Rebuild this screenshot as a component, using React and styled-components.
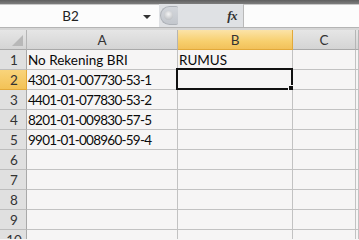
import React from "react";
import styled, { createGlobalStyle } from "styled-components";

const Global = createGlobalStyle`
  html, body { margin: 0; padding: 0; background: #f6f5f5; overflow: hidden; }
  body { font-family: Lato, "Liberation Sans", sans-serif; }
`;

const Page = styled.div`
  width: 359px;
  height: 239px;
  overflow: hidden;
  background: #f6f5f5;
`;

const TopBand = styled.div`
  height: 4px;
  background: linear-gradient(#5f5f5f, #7e7e7e);
`;

const FormulaBar = styled.div`
  display: flex;
  height: 23px;
  background: #dfe1e4;
  border-bottom: 1px solid #b4b4b4;
`;

const NameBox = styled.div`
  position: relative;
  width: 159px;
  background: #fcfcfc;
  border-top: 1px solid #c8c8c8;
  display: flex;
  align-items: center;
  justify-content: center;
  padding-right: 18px;
  box-sizing: border-box;
  font-size: 13.5px;
  color: #222;
`;

const Arrow = styled.span`
  position: absolute;
  right: 8px;
  top: 10px;
  width: 0;
  height: 0;
  border-left: 4px solid transparent;
  border-right: 4px solid transparent;
  border-top: 4px solid #333;
`;

const Middle = styled.div`
  width: 84px;
  display: flex;
  align-items: center;
  justify-content: space-between;
  padding-right: 6px;
  box-sizing: border-box;
`;

const Grip = styled.div`
  width: 18px;
  height: 19px;
  margin-left: 1px;
  border-radius: 10px 2px 2px 10px;
  background: linear-gradient(#d3d6db, #c3c7cd);
  border: 1px solid #aeb2b8;
  border-right: none;
  display: flex;
  align-items: center;
  justify-content: flex-start;
  padding-left: 3px;
  box-sizing: border-box;
  &::after {
    content: "";
    width: 9px;
    height: 9px;
    border-radius: 50%;
    background: radial-gradient(circle at 50% 35%, #f4f4f4, #aeb1b6);
  }
`;

const Fx = styled.span`
  font-family: "Liberation Serif", serif;
  font-style: italic;
  font-weight: bold;
  font-size: 13px;
  color: #333;
  letter-spacing: -0.5px;
`;

const Input = styled.div`
  flex: 1;
  background: #fcfcfc;
  border-left: 1px solid #b9b9b9;
  border-top: 1px solid #c8c8c8;
`;

const Gap = styled.div`
  height: 2px;
  background: #d6d6d6;
`;

const Grid = styled.div`
  display: grid;
  grid-template-columns: 27px 151px 115px 63px 1fr;
  grid-auto-rows: 20px;
`;

const Cell = styled.div`
  position: relative;
  box-sizing: border-box;
  border-right: 1px solid #c2c2c2;
  border-bottom: 1px solid #c2c2c2;
  background: #f6f5f5;
  font-size: 13.5px;
  color: #0a0a0a;
  padding-left: 1px;
  display: flex;
  align-items: center;
  white-space: nowrap;
  overflow: visible;
`;

const Value = styled.span`
  letter-spacing: ${(p) => (p.$num ? "-0.75px" : "0")};
`;

const ColHead = styled.div`
  box-sizing: border-box;
  border-right: 1px solid ${(p) => (p.$sel ? "#e2a93a" : "#b5b5b5")};
  border-bottom: 1px solid ${(p) => (p.$sel ? "#e2a93a" : "#a9a9a9")};
  background: ${(p) =>
    p.$sel
      ? "linear-gradient(#fbe3a8, #f7cf6d 60%, #f2c15a)"
      : "linear-gradient(#e6e6e6, #d4d4d4)"};
  font-size: 13.5px;
  color: #333;
  display: flex;
  align-items: center;
  justify-content: center;
`;

const Corner = styled(ColHead)`
  position: relative;
  &::after {
    content: "";
    position: absolute;
    right: 3px;
    bottom: 3px;
    width: 0;
    height: 0;
    border-left: 11px solid transparent;
    border-bottom: 11px solid #b8b8b8;
  }
`;

const RowHead = styled.div`
  box-sizing: border-box;
  border-right: 1px solid ${(p) => (p.$sel ? "#e2a93a" : "#a9a9a9")};
  border-bottom: 1px solid ${(p) => (p.$sel ? "#e2a93a" : "#bdbdbd")};
  background: ${(p) =>
    p.$sel ? "linear-gradient(#f9d47b, #f3c256)" : "#e0e0e0"};
  font-size: 13.5px;
  color: #333;
  display: flex;
  align-items: center;
  justify-content: center;
  padding-left: 2px;
`;

const Selection = styled.div`
  position: absolute;
  left: -2px;
  top: -2px;
  right: -1px;
  bottom: -1px;
  border: 2px solid #111;
  pointer-events: none;
  &::after {
    content: "";
    position: absolute;
    right: -4px;
    bottom: -4px;
    width: 5px;
    height: 5px;
    background: #111;
    border: 1px solid #f6f5f5;
  }
`;

const cols = ["A", "B", "C", ""];
const data = {
  1: ["No Rekening BRI", "RUMUS"],
  2: ["4301-01-007730-53-1", ""],
  3: ["4401-01-077830-53-2", ""],
  4: ["8201-01-009830-57-5", ""],
  5: ["9901-01-008960-59-4", ""],
};

export default function App() {
  const rows = Array.from({ length: 10 }, (_, i) => i + 1);
  return (
    <Page>
      <Global />
      <TopBand />
      <FormulaBar>
        <NameBox>
          B2
          <Arrow />
        </NameBox>
        <Middle>
          <Grip />
          <Fx>fx</Fx>
        </Middle>
        <Input />
      </FormulaBar>
      <Gap />
      <Grid>
        <Corner />
        {cols.map((c, i) => (
          <ColHead key={i} $sel={c === "B"}>
            {c}
          </ColHead>
        ))}
        {rows.map((r) => (
          <React.Fragment key={r}>
            <RowHead $sel={r === 2}>{r}</RowHead>
            {cols.map((c, ci) => {
              const v = data[r] && data[r][ci] ? data[r][ci] : "";
              return (
                <Cell key={ci}>
                  {v ? <Value $num={/^\d/.test(v)}>{v}</Value> : null}
                  {r === 2 && c === "B" ? <Selection /> : null}
                </Cell>
              );
            })}
          </React.Fragment>
        ))}
      </Grid>
    </Page>
  );
}
